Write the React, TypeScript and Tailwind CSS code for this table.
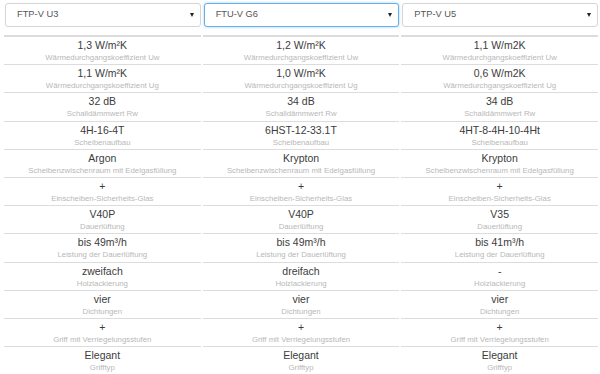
import React from "react";

interface Row {
  value: string;
  label: string;
}

interface Product {
  name: string;
  focused?: boolean;
  values: string[];
}

const labels = [
  "Wärmedurchgangskoeffizient Uw",
  "Wärmedurchgangskoeffizient Ug",
  "Schalldämmwert Rw",
  "Scheibenaufbau",
  "Scheibenzwischenraum mit Edelgasfüllung",
  "Einscheiben-Sicherheits-Glas",
  "Dauerlüftung",
  "Leistung der Dauerlüftung",
  "Holzlackierung",
  "Dichtungen",
  "Griff mit Verriegelungsstufen",
  "Grifftyp",
];

const products: Product[] = [
  {
    name: "FTP-V U3",
    values: ["1,3 W/m²K", "1,1 W/m²K", "32 dB", "4H-16-4T", "Argon", "+", "V40P", "bis 49m³/h", "zweifach", "vier", "+", "Elegant"],
  },
  {
    name: "FTU-V G6",
    focused: true,
    values: ["1,2 W/m²K", "1,0 W/m²K", "34 dB", "6HST-12-33.1T", "Krypton", "+", "V40P", "bis 49m³/h", "dreifach", "vier", "+", "Elegant"],
  },
  {
    name: "PTP-V U5",
    values: ["1,1 W/m2K", "0,6 W/m2K", "34 dB", "4HT-8-4H-10-4Ht", "Krypton", "+", "V35", "bis 41m³/h", "-", "vier", "+", "Elegant"],
  },
];

function FakeSelect({ name, focused }: { name: string; focused?: boolean }) {
  return (
    <div
      className={`ml-[1px] flex h-[24px] items-center justify-between rounded-[3px] border bg-white pl-[11px] pr-[6px] text-[9.3px] text-[#555] ${
        focused ? "border-[#66afe9] shadow-[0_0_3px_rgba(102,175,233,0.6)]" : "border-[#d4d4d4]"
      }`}
    >
      <span>{name}</span>
      {/* kleiner Pfeil */}
      <span className="h-0 w-0 border-x-[2.5px] border-t-[4px] border-x-transparent border-t-[#222]" />
    </div>
  );
}

function Column({ product }: { product: Product }) {
  const rows: Row[] = product.values.map((value, i) => ({ value, label: labels[i] }));

  return (
    <div className="flex flex-col">
      <div className="pt-[3px]">
        <FakeSelect name={product.name} focused={product.focused} />
      </div>
      <div className="mt-[8px] border-b-2 border-[#dcdcdc]" />
      {rows.map((row, i) => (
        <div
          key={i}
          className="flex h-[28.2px] flex-col items-center border-b border-[#dcdcdc] pt-[2px]"
        >
          <span className="text-[10.5px] leading-[13px] text-[#3c3c3c]">{row.value}</span>
          <span className="mt-[1px] text-[7.8px] leading-[10px] text-[#b8b8b8]">{row.label}</span>
        </div>
      ))}
    </div>
  );
}

export default function App() {
  return (
    <div
      className="h-[374px] w-[600px] overflow-hidden bg-white"
      style={{ fontFamily: '"Liberation Sans", Arial, sans-serif' }}
    >
      <div className="grid grid-cols-3 gap-[2px] pl-[4px] pr-[2px]">
        {products.map((p) => (
          <Column key={p.name} product={p} />
        ))}
      </div>
    </div>
  );
}
